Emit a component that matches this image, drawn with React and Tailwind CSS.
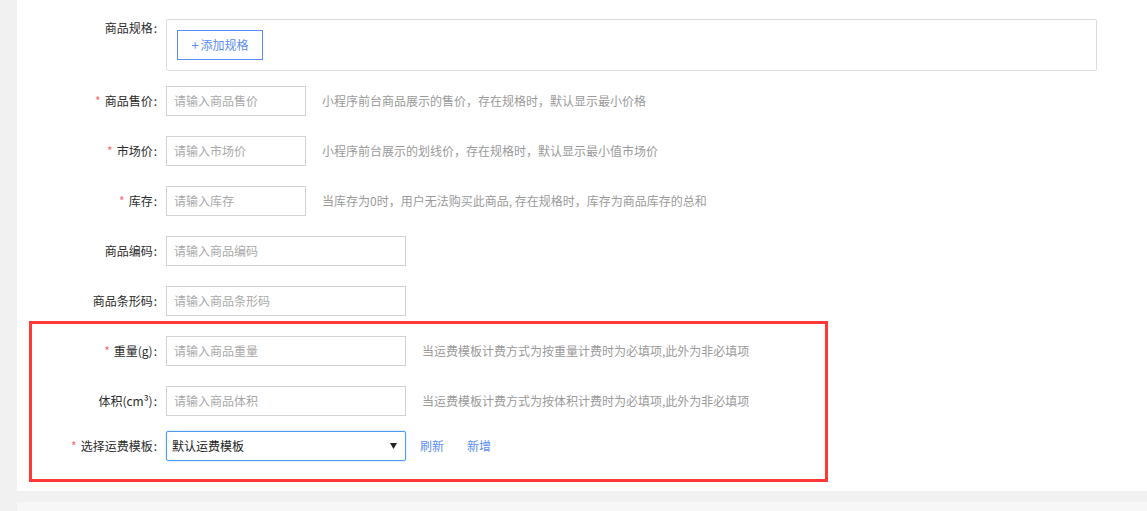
import React from "react";

const font = { fontFamily: '"Noto Sans CJK SC", "Noto Sans", "Liberation Sans", sans-serif' };

function Label({ required, children, top }) {
  return (
    <div
      className={`w-[140px] shrink-0 text-right text-[12px] text-[#2b2b2b] ${top ? "leading-[18px]" : "leading-[30px]"}`}
    >
      {required && <span className="text-[#f56c6c] mr-[4px]">*</span>}
      {children}
      <span className="ml-[1px]">:</span>
    </div>
  );
}

function Input({ placeholder, wide }) {
  return (
    <div
      className={`${wide ? "w-[240px]" : "w-[140px]"} h-[30px] border border-[#d2d2d2] bg-white pl-[7px] text-[12px] leading-[28px] text-[#a9a9a9]`}
    >
      {placeholder}
    </div>
  );
}

function Help({ children }) {
  return <div className="ml-[16px] text-[12px] leading-[30px] text-[#9a9a9a]">{children}</div>;
}

function Row({ children, mb = "mb-[20px]" }) {
  return <div className={`flex items-start ${mb}`}>{children}</div>;
}

export default function App() {
  return (
    <div style={font} className="w-[1147px] h-[511px] overflow-hidden bg-[#f1f1f1] pl-[17px]">
      <div className="relative bg-white h-[491px] pt-[19px]">
        {/* spec */}
        <div className="flex items-start mb-[15px]">
          <Label top>商品规格</Label>
          <div className="ml-[9px] w-[931px] h-[52px] border border-[#dcdcdc] rounded-[2px] pt-[10px] pl-[10px]">
            <div className="w-[86px] h-[30px] border border-[#5b8ef5] flex items-center justify-center text-[12px] text-[#5b8ef5]">
              <span className="mr-[2px] text-[13px]">+</span>添加规格
            </div>
          </div>
        </div>

        <Row>
          <Label required>商品售价</Label>
          <div className="ml-[9px] flex">
            <Input placeholder="请输入商品售价" />
            <Help>小程序前台商品展示的售价，存在规格时，默认显示最小价格</Help>
          </div>
        </Row>
        <Row>
          <Label required>市场价</Label>
          <div className="ml-[9px] flex">
            <Input placeholder="请输入市场价" />
            <Help>小程序前台展示的划线价，存在规格时，默认显示最小值市场价</Help>
          </div>
        </Row>
        <Row>
          <Label required>库存</Label>
          <div className="ml-[9px] flex">
            <Input placeholder="请输入库存" />
            <Help>当库存为0时，用户无法购买此商品, 存在规格时，库存为商品库存的总和</Help>
          </div>
        </Row>
        <Row>
          <Label>商品编码</Label>
          <div className="ml-[9px] flex">
            <Input wide placeholder="请输入商品编码" />
          </div>
        </Row>
        <Row>
          <Label>商品条形码</Label>
          <div className="ml-[9px] flex">
            <Input wide placeholder="请输入商品条形码" />
          </div>
        </Row>
        <Row>
          <Label required>重量(g)</Label>
          <div className="ml-[9px] flex">
            <Input wide placeholder="请输入商品重量" />
            <Help>当运费模板计费方式为按重量计费时为必填项,此外为非必填项</Help>
          </div>
        </Row>
        <Row mb="mb-[15px]">
          <Label>体积(cm³)</Label>
          <div className="ml-[9px] flex">
            <Input wide placeholder="请输入商品体积" />
            <Help>当运费模板计费方式为按体积计费时为必填项,此外为非必填项</Help>
          </div>
        </Row>
        <Row>
          <Label required>选择运费模板</Label>
          <div className="ml-[9px] flex items-center">
            <div className="w-[240px] h-[30px] border border-[#4d9cf8] rounded-[2px] bg-white pl-[5px] pr-[8px] flex items-center justify-between text-[12px] text-[#222] shadow-[0_0_2px_rgba(77,156,248,0.5)]">
              <span>默认运费模板</span>
              <svg width="7" height="6" viewBox="0 0 7 6"><path d="M0 0h7L3.5 6z" fill="#222" /></svg>
            </div>
            <span className="ml-[14px] text-[12px] text-[#5b8ef5]">刷新</span>
            <span className="ml-[23px] text-[12px] text-[#5b8ef5]">新增</span>
          </div>
        </Row>

        {/* annotation box */}
        <div className="absolute left-[12px] top-[321px] w-[799px] h-[161px] border-[3px] border-[#ff3838] pointer-events-none" />
      </div>
      <div className="h-[11px]" />
      <div className="bg-[#f7f7f7] h-[20px]" />
    </div>
  );
}
